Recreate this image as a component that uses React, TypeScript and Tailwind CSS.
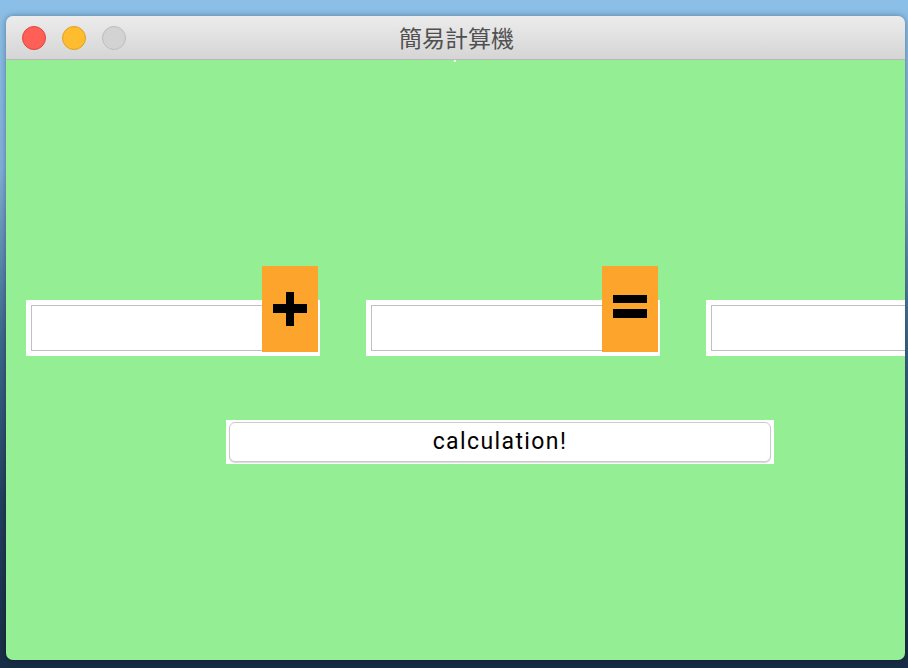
function TrafficLights() {
  return (
    <div className="flex items-center gap-4 pl-4">
      <span className="block w-6 h-6 rounded-full bg-[#fe5f57] border border-[#e0443e]" />
      <span className="block w-6 h-6 rounded-full bg-[#febc2e] border border-[#dea123]" />
      <span className="block w-6 h-6 rounded-full bg-[#d3d3d3] border border-[#bdbdbd]" />
    </div>
  );
}

function OperandField({ op }: { op?: "+" | "=" }) {
  return (
    <div className="relative shrink-0 w-[294px] h-[56px] bg-white p-[5px]">
      <input className="block w-full h-[46px] border border-[#c0c0c0] bg-white outline-none" />
      {op && (
        <div className="absolute right-[2px] top-[-34px] w-[56px] h-[86px] bg-[#fca42b] flex items-center justify-center">
          {op === "+" ? (
            <svg width="34" height="34" viewBox="0 0 34 34">
              <rect x="13" y="0" width="8" height="34" fill="#000" />
              <rect x="0" y="12" width="34" height="9" fill="#000" />
            </svg>
          ) : (
            <svg width="34" height="24" viewBox="0 0 34 24" className="mb-[4px]">
              <rect x="0" y="0" width="34" height="8" fill="#000" />
              <rect x="0" y="14" width="34" height="9" fill="#000" />
            </svg>
          )}
        </div>
      )}
    </div>
  );
}

export default function App() {
  return (
    <div className="w-[908px] h-[668px] overflow-hidden pt-[16px] pl-[6px] bg-[linear-gradient(180deg,#8cbfe8_0%,#7fb0d8_25%,#3d6a8e_50%,#22405e_75%,#172d45_100%)]">
      <div className="w-[899px] h-[644px] rounded-[7px] overflow-hidden flex flex-col shadow-[0_0_6px_rgba(0,0,0,0.35)]">
        <div className="relative h-[44px] shrink-0 flex items-center bg-[linear-gradient(180deg,#ececec,#d5d5d5)] border-b border-[#b9b9b9]">
          <TrafficLights />
          <div className="absolute inset-0 flex items-center justify-center pl-[2px] text-[23px] text-[#505050] font-['Noto_Sans_CJK_TC','Noto_Sans_CJK_SC',sans-serif]">
            簡易計算機
          </div>
        </div>
        <div className="relative flex-1 bg-[#94ee94] overflow-hidden">
          <span className="absolute left-[448px] top-0 w-[2px] h-[2px] bg-white" />
          <div className="flex gap-[46px] pl-[20px] pt-[240px]">
            <OperandField op="+" />
            <OperandField op="=" />
            <OperandField />
          </div>
          <div className="ml-[220px] mt-[64px] w-[548px] h-[44px] bg-white pl-[3px] pr-[3px] pt-[2px]">
            <button className="w-full h-[40px] rounded-[6px] border border-[#cbcbcb] bg-white shadow-[0_1px_1px_rgba(0,0,0,0.15)] text-[23px] tracking-[1.4px] text-black font-['Roboto','Liberation_Sans',sans-serif]">
              calculation!
            </button>
          </div>
        </div>
      </div>
    </div>
  );
}
